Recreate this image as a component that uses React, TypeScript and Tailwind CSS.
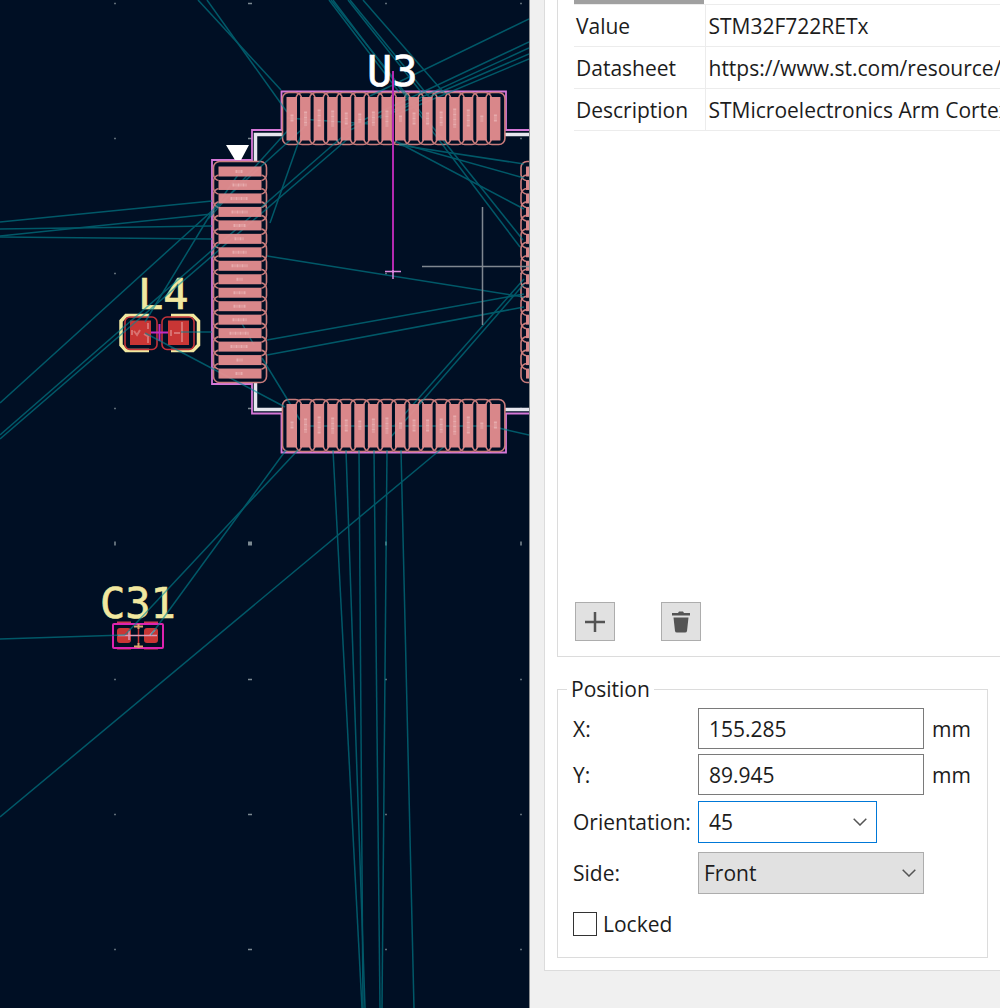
import { useState } from "react";
import type { ReactNode } from "react";

const fields = [
  { name: "Value", value: "STM32F722RETx" },
  { name: "Datasheet", value: "https://www.st.com/resource/en" },
  { name: "Description", value: "STMicroelectronics Arm Cortex" },
];

// x1, y1, x2, y2
const ratsnest = [
  [198, 0, 281, 90],
  [207, 0, 287, 112],
  [329, 0, 399, 92],
  [331, 0, 523, 240],
  [333, 0, 520, 247],
  [348, 0, 421, 92],
  [350, 0, 430, 98],
  [363, 0, 445, 94],
  [529, 19, 370, 96],
  [529, 42, 342, 130],
  [529, 48, 350, 130],
  [529, 54, 380, 118],
  [529, 59, 395, 115],
  [287, 118, 370, 124],
  [399, 145, 524, 164],
  [399, 143, 524, 178],
  [395, 141, 524, 209],
  [301, 135, 270, 223],
  [350, 137, 0, 439],
  [342, 137, 0, 435],
  [310, 122, 0, 403],
  [290, 128, 208, 219],
  [210, 215, 145, 322],
  [240, 172, 210, 215],
  [0, 222, 212, 201],
  [0, 236, 212, 214],
  [0, 229, 212, 226],
  [0, 237, 212, 239],
  [267, 256, 524, 297],
  [267, 340, 524, 294],
  [267, 355, 524, 307],
  [395, 425, 524, 279],
  [390, 438, 524, 284],
  [262, 358, 300, 420],
  [240, 320, 254, 345],
  [145, 333, 285, 407],
  [181, 332, 212, 332],
  [333, 450, 362, 1008],
  [346, 450, 365, 1008],
  [359, 450, 363, 1008],
  [374, 450, 380, 1008],
  [387, 450, 382, 1008],
  [401, 450, 414, 1008],
  [446, 445, 0, 817],
  [305, 426, 490, 426],
  [490, 426, 529, 435],
  [298, 450, 125, 635],
  [286, 450, 151, 635],
  [0, 639, 125, 635],
];

const gridX = [115, 250, 386, 521];
const gridY = [3, 138, 273, 408, 543, 679, 814, 949];
const pins = Array.from({ length: 16 }, (_, i) => i);
const netMarks = [8, 14, 18, 16, 12, 10, 14, 16, 6, 12, 12, 14, 20, 18, 6, 8];

function RowClearance({ y }: { y: number }) {
  return (
    <g>
      {pins.map((i) => (
        <rect key={i} x={282.5 + i * 13.56} y={y} width={19} height={52} rx={6} fill="none" stroke="#c97c7c" strokeWidth={1.6} />
      ))}
      {pins.map((i) => (
        <rect key={i} x={285 + i * 13.56} y={y + 5} width={14} height={42} fill="#000f24" />
      ))}
    </g>
  );
}

function ColumnClearance({ x }: { x: number }) {
  return (
    <g>
      {pins.map((i) => (
        <rect key={i} x={x} y={161.5 + i * 13.47} width={53} height={19} rx={6} fill="none" stroke="#c97c7c" strokeWidth={1.6} />
      ))}
      {pins.map((i) => (
        <rect key={i} x={x + 5} y={164.5 + i * 13.47} width={43} height={14} fill="#000f24" />
      ))}
    </g>
  );
}

function RowPads({ y }: { y: number }) {
  return (
    <g>
      {pins.map((i) => (
        <g key={i}>
          <rect x={286.5 + i * 13.56} y={y + 4.5} width={10.5} height={43.5} fill="#e58e90" opacity={0.95} />
          <path
            d={`M${292 + i * 13.56} ${y + 26 - netMarks[i] / 2}v${netMarks[i]}`}
            stroke="#f6d0d0"
            strokeWidth={3}
            strokeDasharray="2 1 1 1"
            opacity={0.5}
          />
        </g>
      ))}
    </g>
  );
}

function ColumnPads({ x }: { x: number }) {
  return (
    <g>
      {pins.map((i) => (
        <g key={i}>
          <rect x={x + 5} y={166.5 + i * 13.47} width={43} height={10} fill="#e58e90" opacity={0.95} />
          <path
            d={`M${x + 26 - netMarks[i] / 2} ${171.5 + i * 13.47}h${netMarks[i]}`}
            stroke="#f6d0d0"
            strokeWidth={3}
            strokeDasharray="2 1 1 1"
            opacity={0.5}
          />
        </g>
      ))}
    </g>
  );
}

function Designator({ x, y, fill, children }: { x: number; y: number; fill: string; children: ReactNode }) {
  return (
    <text x={x} y={y} fill={fill} stroke={fill} strokeWidth={0.7} fontSize={42} fontFamily='"DejaVu Sans Mono", monospace'>
      {children}
    </text>
  );
}

function Board() {
  return (
    <svg className="absolute inset-0 h-full w-full" role="img" aria-label="PCB layout">
      {gridY.map((y) =>
        gridX.map((x) => {
          const w = x === 250 ? 4 : 1.5;
          const h = y === 543 ? 4 : 1.5;
          return <rect key={`${x}-${y}`} x={x - w / 2} y={y - h / 2 + 0.5} width={w} height={h} fill="#7d8a92" />;
        })
      )}

      {/* L4 */}
      <rect x={130} y={320.5} width={21} height={24.5} fill="#c93635" />
      <rect x={168} y={320.5} width={21} height={24.5} fill="#c93635" />
      <g fill="none">
        <path d="M149 315.500H126L121 321V345L126 350.500H149M171 315.500H193L198.500 321V345L193 350.500H171" stroke="#f1e8a0" strokeWidth={3.5} />
        <rect x={125} y={317} width={32} height={32.5} rx={5} stroke="#c4333a" strokeWidth={1.6} />
        <rect x={162} y={317} width={32} height={32.5} rx={5} stroke="#c4333a" strokeWidth={1.6} />
        <path d="M132 330v5M134 331l3 4 3-5M144 334l5 3M148 323v6M148 337v6M171 330v6M174 333h6M182 322v20" stroke="#e49a98" strokeWidth={2} opacity={0.6} />
        <path d="M151 332.500H168M159.500 324V341" stroke="#c32bc0" strokeWidth={2} />
      </g>

      {/* C31 */}
      <rect x={117} y={628} width={14} height={15} rx={3} fill="#c93635" />
      <rect x={144} y={628} width={14} height={15} rx={3} fill="#c93635" />
      <g fill="none">
        <path d="M117 622.500H131M144 622.500H158M117 648.500H131M144 648.500H158" stroke="#c93650" strokeWidth={2} />
        <rect x={113} y={624} width={50} height={24} rx={1} stroke="#dd23ae" strokeWidth={2} />
        <path d="M138.500 628V644" stroke="#c93635" strokeWidth={1.5} />
        <path d="M134 626.500H143M134 646.500H143M138.500 624V629M138.500 643V648" stroke="#dba36c" strokeWidth={2} />
        <path d="M118 635.500H157M129 631V640M150 635L155 630" stroke="#dd9bb5" strokeWidth={1.5} />
      </g>

      <Designator x={138} y={309} fill="#f1e8a0">L4</Designator>
      <Designator x={100} y={618} fill="#f1e8a0">C31</Designator>

      {/* U3 */}
      <g fill="none">
        <path d="M283 134.500H255.500V161M255.500 383V409.500H283M505 134.500H529M505 409.500H529" stroke="#e6e6ee" strokeWidth={3.5} />
        <path
          d="M529 130H506V91.500H281.500V130H252V160H212V384H252V413.500H281.500V452.500H506V413.500H529"
          stroke="#d678d8"
          strokeWidth={1.8}
        />
      </g>
      <RowClearance y={92.5} />
      <RowClearance y={399.5} />
      <ColumnClearance x={213.5} />
      <ColumnClearance x={521} />

      <g stroke="#008a96" strokeWidth={1.5} opacity={0.6}>
        {ratsnest.map(([x1, y1, x2, y2], i) => (
          <line key={i} x1={x1} y1={y1} x2={x2} y2={y2} />
        ))}
      </g>

      <RowPads y={92.5} />
      <RowPads y={399.5} />
      <ColumnPads x={213.5} />
      <ColumnPads x={521} />
      <path d="M226 145H249L241 160H235Z" fill="#fff" />
      <Designator x={367} y={86} fill="#ffffff">U3</Designator>

      {/* anchor and cursor */}
      <path d="M393 71V273" stroke="#b32ab0" strokeWidth={2} />
      <path d="M385 271.500H401M393 270V279" stroke="#dc8ae0" strokeWidth={1.5} />
      <path d="M482.500 207V325M422 266.500H529" stroke="#7f8790" strokeWidth={1.5} />
    </svg>
  );
}

function Chevron() {
  return (
    <svg width="14" height="8" viewBox="0 0 14 8" fill="none" stroke="#555" strokeWidth="1.5">
      <path d="M0.700 0.700L7 7L13.300 0.700" />
    </svg>
  );
}

export default function App() {
  const [x, setX] = useState("155.285");
  const [y, setY] = useState("89.945");
  const [orientation, setOrientation] = useState("45");
  const [side, setSide] = useState("Front");
  const [locked, setLocked] = useState(false);

  return (
    <div className="flex min-h-screen overflow-hidden bg-[#f0f0f0] font-['Open_Sans',sans-serif] text-[21px] leading-7 text-[#1c1c1c]">
      <main className="relative min-w-0 flex-1 overflow-hidden bg-[#000f24]">
        <Board />
      </main>

      <aside className="w-[471px] shrink-0 overflow-hidden border-l border-[#8c8f92] pl-[14px]">
        <div className="border-b border-l border-[#dcdcdc] bg-white pb-3 pl-3">
          {/* Fields */}
          <section className="flex h-[657px] flex-col justify-between overflow-hidden border-b border-l border-[#dcdcdc] pb-[15px] pl-4">
            <div>
              <div className="h-1 w-[130px] bg-[#a0a0a0]" />
              <table className="w-full table-fixed border-collapse">
                <tbody>
                  {fields.map((f) => (
                    <tr key={f.name} className="h-[42px] border-y border-[#ececec]">
                      <th scope="row" className="w-[131px] border-r border-[#ececec] pl-[2px] text-left font-normal">
                        {f.name}
                      </th>
                      <td className="overflow-hidden pl-[3px] whitespace-nowrap">{f.value}</td>
                    </tr>
                  ))}
                </tbody>
              </table>
            </div>
            <div className="flex gap-[46px] pl-px">
              <button aria-label="Add field" className="flex h-[39px] w-10 items-center justify-center border border-[#adadad] bg-[#e1e1e1]">
                <svg width="20" height="20" viewBox="0 0 20 20" stroke="#545454" strokeWidth="2.500">
                  <path d="M10 0V20M0 10H20" />
                </svg>
              </button>
              <button aria-label="Delete field" className="flex h-[39px] w-10 items-center justify-center border border-[#adadad] bg-[#e1e1e1]">
                <svg width="18" height="22" viewBox="0 0 18 22" fill="#545454">
                  <path d="M0 2H6L7 0.500H11L12 2H18V4.500H0ZM1.500 6.500H16.500L15 20Q14.800 21.500 13 21.500H5Q3.200 21.500 3 20Z" />
                </svg>
              </button>
            </div>
          </section>

          {/* Position */}
          <fieldset className="mt-[18px] mr-3 border border-[#dcdcdc] pr-2 pb-[19px] pl-[15px]">
            <legend className="-ml-[6px] px-1">Position</legend>
            <div className="flex flex-col gap-[5px] pt-[5px]">
              <div className="flex items-center">
                <label htmlFor="pos-x" className="w-[125px]">X:</label>
                <input id="pos-x" value={x} onChange={(e) => setX(e.target.value)} className="h-[41px] w-[226px] border border-[#7a7a7a] bg-white pl-[10px] outline-none" />
                <span className="pl-2">mm</span>
              </div>
              <div className="flex items-center">
                <label htmlFor="pos-y" className="w-[125px]">Y:</label>
                <input id="pos-y" value={y} onChange={(e) => setY(e.target.value)} className="h-[41px] w-[226px] border border-[#7a7a7a] bg-white pl-[10px] outline-none" />
                <span className="pl-2">mm</span>
              </div>
              <div className="flex items-center pt-px">
                <label htmlFor="orientation" className="w-[125px]">Orientation:</label>
                <div className="flex h-[42px] w-[179px] border border-[#0078d7]">
                  <input id="orientation" value={orientation} onChange={(e) => setOrientation(e.target.value)} className="min-w-0 flex-1 pl-[10px] outline-none" />
                  <button aria-label="Show angles" className="flex w-8 items-center justify-center">
                    <Chevron />
                  </button>
                </div>
              </div>
              <div className="flex items-center pt-1">
                <label htmlFor="side" className="w-[125px]">Side:</label>
                <div className="relative w-[226px]">
                  <select id="side" value={side} onChange={(e) => setSide(e.target.value)} className="h-[42px] w-full appearance-none border border-[#adadad] bg-[#e1e1e1] pl-[5px]">
                    <option>Front</option>
                    <option>Back</option>
                  </select>
                  <span className="pointer-events-none absolute inset-y-0 right-2 flex items-center">
                    <Chevron />
                  </span>
                </div>
              </div>
              <label className="flex items-center gap-[6px] pt-[11px]">
                <input type="checkbox" checked={locked} onChange={(e) => setLocked(e.target.checked)} className="size-6 appearance-none border border-[#333] bg-white checked:bg-[#3c3c3c]" />
                Locked
              </label>
            </div>
          </fieldset>
        </div>
      </aside>
    </div>
  );
}
